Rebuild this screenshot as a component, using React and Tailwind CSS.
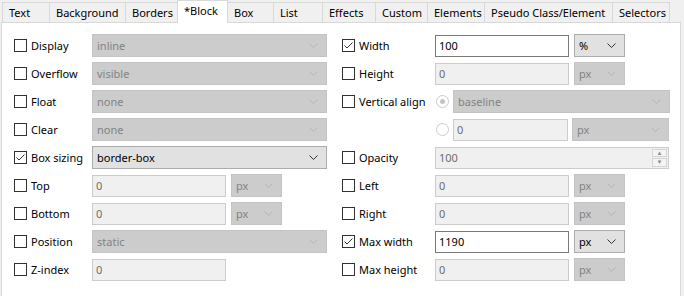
import React from "react";

// tabs: label + width (px, incl. both borders, neighbours overlap by 1px)
const tabs = [
  { name: "Text", w: 48 },
  { name: "Background", w: 77 },
  { name: "Borders", w: 53 },
  { name: "*Block", w: 51, active: true },
  { name: "Box", w: 47 },
  { name: "List", w: 50 },
  { name: "Effects", w: 54 },
  { name: "Custom", w: 53 },
  { name: "Elements", w: 58 },
  { name: "Pseudo Class/Element", w: 129 },
  { name: "Selectors", w: 58 },
];

function Chevron({ disabled }) {
  return (
    <svg width="9" height="5" viewBox="0 0 9 5" className="shrink-0">
      <polyline
        points="0.5,0.5 4.5,4.5 8.5,0.5"
        fill="none"
        stroke={disabled ? "#b4b4b4" : "#333333"}
        strokeWidth="1"
      />
    </svg>
  );
}

function Select({ value, w, disabled }) {
  return (
    <div
      className={`flex items-center justify-between h-[23px] border pl-[4px] pr-[8px] shrink-0 ${
        disabled ? "bg-[#cccccc] border-[#c4c4c4] text-[#838383]" : "bg-[#e1e1e1] border-[#adadad] text-black"
      }`}
      style={{ width: w }}
    >
      <span>{value}</span>
      <Chevron disabled={disabled} />
    </div>
  );
}

function Input({ value, w, disabled, spin }) {
  return (
    <div
      className={`relative flex items-center h-[22px] border pl-[3px] shrink-0 ${
        disabled ? "bg-[#f0f0f0] border-[#cccccc] text-[#6d6d6d]" : "bg-white border-[#7a7a7a] text-black"
      }`}
      style={{ width: w }}
    >
      <span>{value}</span>
      {spin && (
        <div className="absolute right-[1px] top-[1px] bottom-[1px] w-[15px] flex flex-col gap-[1px]">
          <div className="flex-1 flex items-center justify-center border border-[#d4d4d4] bg-[#f4f4f4] text-[6px] leading-none text-[#8a8a8a]">▲</div>
          <div className="flex-1 flex items-center justify-center border border-[#d4d4d4] bg-[#f4f4f4] text-[6px] leading-none text-[#8a8a8a]">▼</div>
        </div>
      )}
    </div>
  );
}

function Checkbox({ checked }) {
  return (
    <div className="w-[13px] h-[13px] border border-[#333333] bg-white shrink-0 flex items-center justify-center">
      {checked && (
        <svg width="11" height="11" viewBox="0 0 11 11">
          <polyline points="1.5,5.5 4,8 9.5,2.5" fill="none" stroke="#333333" strokeWidth="1" />
        </svg>
      )}
    </div>
  );
}

function Radio({ checked }) {
  return (
    <div className="w-[13px] h-[13px] rounded-full border border-[#cccccc] bg-white shrink-0 flex items-center justify-center">
      {checked && <div className="w-[5px] h-[5px] rounded-full bg-[#c2c2c2]"></div>}
    </div>
  );
}

function Row({ label, checked, labelW, children }) {
  return (
    <div className="flex items-center h-[23px]">
      <div className="flex items-center gap-[4px] shrink-0" style={{ width: labelW }}>
        {label && <Checkbox checked={checked} />}
        {label && <span className="whitespace-nowrap">{label}</span>}
      </div>
      <div className="flex items-center gap-[5px]">{children}</div>
    </div>
  );
}

export default function App() {
  return (
    <div className="w-[684px] h-[296px] overflow-hidden bg-[#f0f0f0] text-[11px] leading-[15px] text-black font-['Noto_Sans',sans-serif]">
      {/* tab strip */}
      <div className="flex items-end h-[22px] pl-[2px]">
        {tabs.map((t, i) => (
          <div
            key={t.name}
            className={`flex items-center pl-[6px] border-t border-l border-r whitespace-nowrap ${
              i > 0 ? "-ml-px" : ""
            } ${
              t.active
                ? "relative z-10 h-[23px] -mb-px bg-white border-[#d9d9d9] pb-[3px]"
                : "h-[20px] bg-[#f0f0f0] border-[#d9d9d9]"
            }`}
            style={{ width: t.w }}
          >
            {t.name}
          </div>
        ))}
      </div>

      {/* panel */}
      <div className="ml-[1px] w-[680px] h-[290px] border border-[#d9d9d9] bg-white pt-[11px] pl-[12px] flex">
        {/* left column */}
        <div className="w-[328px] flex flex-col gap-[5px]">
          <Row label="Display" labelW={78}><Select value="inline" w={235} disabled /></Row>
          <Row label="Overflow" labelW={78}><Select value="visible" w={235} disabled /></Row>
          <Row label="Float" labelW={78}><Select value="none" w={235} disabled /></Row>
          <Row label="Clear" labelW={78}><Select value="none" w={235} disabled /></Row>
          <Row label="Box sizing" checked labelW={78}><Select value="border-box" w={235} /></Row>
          <Row label="Top" labelW={78}>
            <Input value="0" w={134} disabled />
            <Select value="px" w={51} disabled />
          </Row>
          <Row label="Bottom" labelW={78}>
            <Input value="0" w={134} disabled />
            <Select value="px" w={51} disabled />
          </Row>
          <Row label="Position" labelW={78}><Select value="static" w={235} disabled /></Row>
          <Row label="Z-index" labelW={78}><Input value="0" w={134} disabled /></Row>
        </div>

        {/* right column */}
        <div className="flex-1 flex flex-col gap-[5px]">
          <Row label="Width" checked labelW={93}>
            <Input value="100" w={134} />
            <Select value="%" w={51} />
          </Row>
          <Row label="Height" labelW={93}>
            <Input value="0" w={134} disabled />
            <Select value="px" w={51} disabled />
          </Row>
          <Row label="Vertical align" labelW={93}>
            <div className="flex items-center gap-[4px] ml-[1px]">
              <Radio checked />
              <Select value="baseline" w={217} disabled />
            </div>
          </Row>
          <Row labelW={93}>
            <div className="flex items-center gap-[4px] ml-[1px]">
              <Radio />
              <Input value="0" w={115} disabled />
              <Select value="px" w={97} disabled />
            </div>
          </Row>
          <Row label="Opacity" labelW={93}><Input value="100" w={234} disabled spin /></Row>
          <Row label="Left" labelW={93}>
            <Input value="0" w={134} disabled />
            <Select value="px" w={51} disabled />
          </Row>
          <Row label="Right" labelW={93}>
            <Input value="0" w={134} disabled />
            <Select value="px" w={51} disabled />
          </Row>
          <Row label="Max width" checked labelW={93}>
            <Input value="1190" w={134} />
            <Select value="px" w={51} />
          </Row>
          <Row label="Max height" labelW={93}>
            <Input value="0" w={134} disabled />
            <Select value="px" w={51} disabled />
          </Row>
        </div>
      </div>
    </div>
  );
}
